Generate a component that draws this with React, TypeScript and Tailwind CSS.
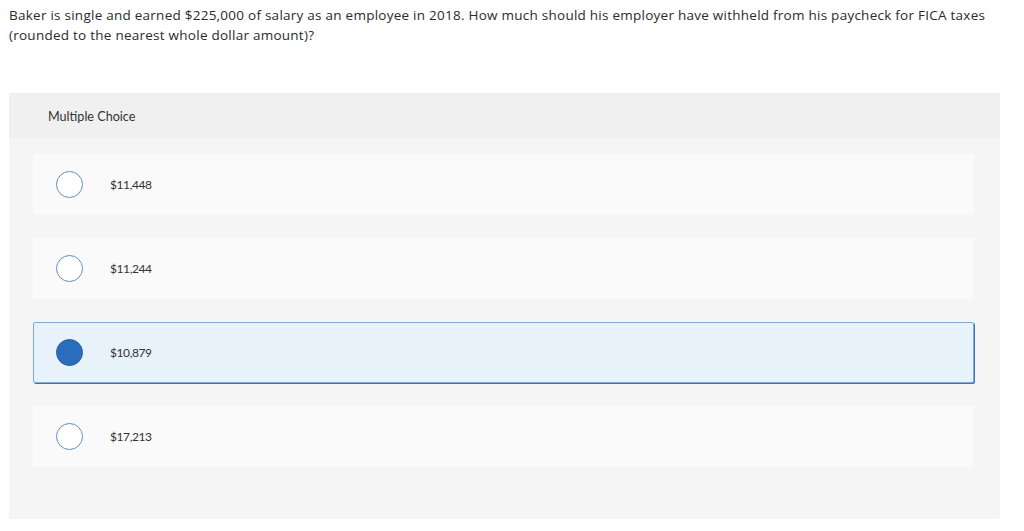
import React, { useState } from 'react';

const options = ['$11,448', '$11,244', '$10,879', '$17,213'];

const App: React.FC = () => {
  const [selected, setSelected] = useState(2);

  return (
    <div className="bg-white min-h-[531px] font-['Lato',sans-serif] text-[#333]">
      <p className="pl-[9px] pr-[10px] pt-[5px] font-['Open_Sans',sans-serif] text-[13.5px] leading-[20px] tracking-[0.25px] text-[#2b2b2b]">
        Baker is single and earned $225,000 of salary as an employee in 2018. How much should his employer have withheld from his paycheck for FICA taxes (rounded to the nearest whole dollar amount)?
      </p>

      <div className="ml-[9px] mt-[48px] w-[991px] bg-[#f5f5f5] rounded-[2px]">
        <div className="h-[45px] bg-[#f0f0f0] flex items-center pt-[3px] pl-[39px] text-[12.6px]">
          Multiple Choice
        </div>

        <div className="pt-4 pb-[52px] pl-6 pr-[26px] flex flex-col gap-[23px]">
          {options.map((opt, i) => {
            const isSel = i === selected;
            return (
              <label
                key={opt}
                onClick={() => setSelected(i)}
                className={`h-[61px] flex items-center rounded-[2px] cursor-pointer ${
                  isSel
                    ? 'bg-[#e8f2fb] border border-[#7ea9d9] shadow-[1px_1px_0_#3f74b5]'
                    : 'bg-[#fafafa] border border-transparent'
                }`}
              >
                <span
                  className={`ml-[22px] w-[27px] h-[27px] rounded-full shrink-0 ${
                    isSel
                      ? 'bg-[#2a6ebb] border border-[#255f9f]'
                      : 'bg-white border-[1.5px] border-[#5f8fbd]'
                  }`}
                />
                <span className="ml-[27px] text-[12px] tracking-[-0.4px]">{opt}</span>
              </label>
            );
          })}
        </div>
      </div>
    </div>
  );
};

export default App;
